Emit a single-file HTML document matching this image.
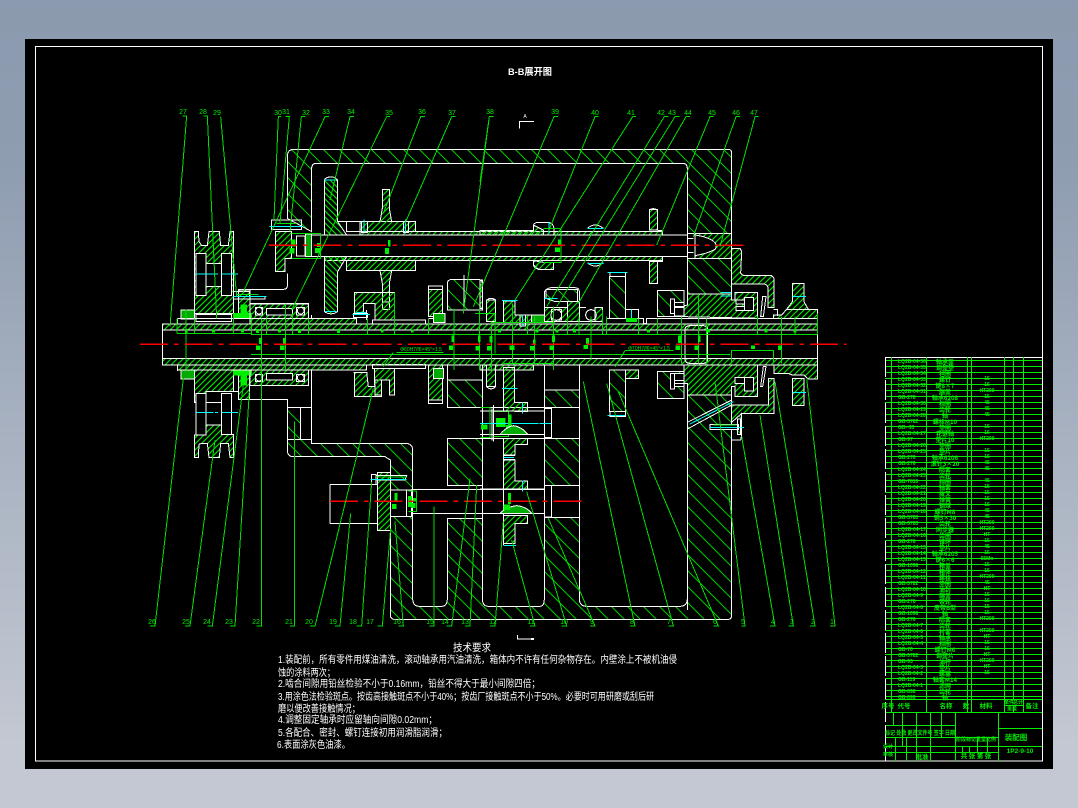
<!DOCTYPE html>
<html><head><meta charset="utf-8"><title>B-B展开图</title>
<style>
html,body{margin:0;padding:0;width:1078px;height:808px;overflow:hidden;background:linear-gradient(180deg,#8b9aae 0,#8f9db1 20%,#c3c8d2 92%,#c3c8d2 100%)}
svg{position:absolute;left:0;top:0;display:block}
.w{fill:none;stroke:#fff;stroke-width:3}
.b{fill:#000;stroke:#fff;stroke-width:3}
.c{fill:url(#c);stroke:#fff;stroke-width:3}
.f{fill:url(#f);stroke:#fff;stroke-width:3}
.k{fill:url(#k);stroke:#fff;stroke-width:3}
.d{fill:url(#d);stroke:#fff;stroke-width:3}
.g{fill:none;stroke:#0d0;stroke-width:3}
.G{fill:#0e0;stroke:#0e0;stroke-width:3}
.y{fill:none;stroke:#0ff;stroke-width:3}
.r{fill:none;stroke:#f00;stroke-width:4;stroke-dasharray:84 18 14 18}
.t{font-family:"Liberation Sans","Noto Sans CJK SC",sans-serif;fill:#fff}
.n{font-family:"Liberation Sans",sans-serif;font-size:7px;fill:#0e0;text-anchor:middle}
.s{font-family:"Liberation Sans",sans-serif;font-size:5px;font-weight:bold;fill:#0e0}
.z{font-family:"Noto Sans CJK SC","Liberation Sans",sans-serif;font-size:6px;font-weight:bold;fill:#0e0;text-anchor:middle}
</style></head><body>
<svg width="1078" height="808" viewBox="0 0 1078 808" shape-rendering="crispEdges" xmlns="http://www.w3.org/2000/svg">
<defs>
<pattern id="c" width="48" height="48" patternUnits="userSpaceOnUse"><path shape-rendering="geometricPrecision" d="M-5 -5L53 53M-15 33L15 63M33 -15L63 15" stroke="#0c0" stroke-width="3" fill="none"/></pattern>
<pattern id="f" width="18" height="18" patternUnits="userSpaceOnUse"><path shape-rendering="geometricPrecision" d="M-3 21L21 -3M-6 6L6 -6M12 24L24 12" stroke="#0d0" stroke-width="3.5" fill="none"/></pattern>
<pattern id="k" width="18" height="18" patternUnits="userSpaceOnUse"><path shape-rendering="geometricPrecision" d="M-3 -3L21 21M-6 12L6 24M12 -6L24 6" stroke="#0d0" stroke-width="3.5" fill="none"/></pattern>
<pattern id="d" width="9" height="9" patternUnits="userSpaceOnUse"><rect width="9" height="9" fill="#0a0"/></pattern>
<pattern id="rows" width="10" height="6" patternUnits="userSpaceOnUse"><rect width="10" height="1" fill="#0e0"/></pattern>
</defs>
<rect x="25" y="39" width="1028" height="730" fill="#000"/>
<rect x="35.5" y="46.5" width="1007" height="714.5" fill="none" stroke="#fff"/>

<g transform="translate(130,100) scale(.33333)">
<!-- housing top -->
<path class="c" d="M472 170Q472 148 492 148H1795Q1805 148 1805 160V400H1672V205Q1672 190 1657 190H560Q545 190 545 205V395L472 355Z"/>
<!-- housing lower -->
<g transform="translate(0,795)">
<path class="c" d="M472 223H545V235H830Q848 238 848 255V700Q848 724 868 724H935Q952 724 952 700V460H1057V700Q1057 724 1075 724H1230Q1243 724 1243 700V458H1348V700Q1348 724 1370 724H1650Q1672 724 1672 700V90H1805V750Q1805 764 1790 764H800Q781 764 781 750V285L765 275H490Q472 275 472 255Z"/>
<path class="w" d="M358 103H472V223M472 127H545M511 127V223M545 15V225"/>
<path class="c" d="M472 127H511V223H472Z"/>
<path class="c" d="M952 45H1057V127H952ZM952 220H1057V362H952ZM1243 75H1348V127H1243ZM1243 220H1348V362H1243Z"/>
<path class="w" d="M600 358H742M600 475H742M600 358V475M845 373H1265M845 445H1265M952 362H1057M952 127H1265M952 220H1265M1265 130V218M1265 362V456M1057 0V45M952 0V45M1243 0V75M1348 0V75M1265 362H1348M1265 458H1348M1265 127H1348M1265 220H1348"/>
<path class="b" d="M1243 130H1265V218H1243ZM1243 362H1265V456H1243Z"/>
<path class="f" d="M742 322H782V497H742Z"/>
<path class="b" d="M782 375H830V455H782ZM830 375H845V455H830Z"/>
<path class="w" d="M725 328H738V358H725ZM738 332H830L825 345H738"/>
<path class="y" d="M722 344H830"/>
<path class="g" d="M738 336H830M835 378H860V440H835"/>
<path class="G" d="M795 385h6v20h-6zM788 418h10v12h-10zM835 395h10v30h-10zM850 400h6v8h-6zM845 415h10v12h-10z"/>
<path class="w" d="M1086 130V225H1087M1090 120V230"/>
<path class="g" d="M1090 140H1135V215H1090"/>
<path class="G" d="M1100 160h25v25h-25z"/>
<path class="y" d="M1082 175H1120M1120 175H1240" stroke-dasharray="70 14 10 14"/>
</g>
<!-- main top shaft -->
<path class="w" d="M545 405H1672M545 470H1672"/>
<path class="f" d="M690 395H1598V405H690Z"/>
<path class="f" d="M583 470H1598V482H583Z"/>
<!-- upper gear -->
<path class="k" d="M583 240H623V365L650 405H583Z"/>
<path class="k" d="M583 470H650L623 515V635Q603 648 583 635Z"/>
<path class="w" d="M583 240Q590 228 612 232L623 240M623 365H857V395M650 365V395H690"/>
<path class="y" d="M585 240H620M585 635H620"/>
<path class="f" d="M650 482H857V512H650Z"/>
<path class="f" d="M750 365L757 325V268H778V325L785 365H857V395H690V365Z"/>
<path class="f" d="M750 512L757 550V628H778V550L785 512Z"/>
<path class="b" d="M757 606H778V628H757Z"/>
<path class="y" d="M702 358V400M826 358V400"/>
<path class="w" d="M694 365V398H712V365M820 365V398H836V365"/>
<!-- cover left -->
<path class="f" d="M436 395H485V475H465V515H436Z"/>
<path class="w" d="M465 475H485M472 520V558Q472 568 460 568H325V575"/>
<path class="b" d="M500 408H525V468H500Z"/>
<path class="d" d="M527 402H545V470H527Z"/>
<path class="g" d="M485 400H572V475H485"/>
<path class="G" d="M485 420h10v18h-10zM480 445h12v14h-12zM562 430h10v10h-10zM556 445h14v12h-14z"/>
<path class="w" d="M425 360H515V388H425Z"/>
<path class="y" d="M418 380H518"/>
<path class="g" d="M440 370H500"/>
<!-- pulley -->
<path class="f" d="M193 395H205L207 425L215 437H232L237 395H268L272 437H295L300 395H310V640H193Z"/>
<path class="b" d="M198 460H228V587H198ZM275 460H305V587H275ZM228 490H275V560H228ZM198 643H305V665H198Z"/>
<path class="y" d="M198 522H264M275 522H324"/>
<path class="d" d="M153 630H193V657H153Z"/>
<path class="f" d="M325 570H360V640H325Z"/>
<path class="w" d="M310 575H358V590H405V597H310Z"/>
<path class="y" d="M310 590H410"/>
<path class="g" d="M320 583H385"/>
<path class="G" d="M333 615h17v25h-17zM310 640h55v15h-55z"/>
<path class="f" d="M360 612H535V655H360Z"/>
<path class="b" d="M376 622H398V645H376ZM500 622H524V645H500ZM410 625H487V645H410Z"/>
<circle cx="387" cy="632" r="10" class="b"/><circle cx="512" cy="632" r="10" class="b"/>
<path class="w" d="M142 655H680M142 655V672M360 610H535V655M727 660H887V672H727ZM710 630V660M545 645V655"/>
<path class="f" d="M360 655H680V672H360Z"/>
<!-- lower gear group left -->
<path class="f" d="M673 577H783L793 577V660H735V610H700V640H673Z"/>
<path class="w" d="M670 640H712V652H670Z"/>
<path class="y" d="M667 644H720M680 638H708"/>
<path class="f" d="M895 568H938V650H895Z"/>
<path class="w" d="M895 568V558H938V568M895 655H938V668"/>
<path class="d" d="M910 640H945V668H910Z"/>
<path class="c" d="M952 550Q952 540 965 538H1045Q1057 540 1057 550V630H952Z"/>
<path class="w" d="M1002 525V630"/>
<!-- lower left -->
<g transform="translate(0,795)">
<path class="f" d="M193 15H310V80H275H228L228 112H193Z"/>
<path class="b" d="M198 85H228V210H198ZM275 85H305V208H275ZM228 112H275V180H228Z"/>
<path class="f" d="M193 210H228V180H275V208H310V277H300L295 235H272L268 277H237L232 235H215L207 238L205 277H193Z"/>
<path class="y" d="M198 142H250M255 142H264M275 142H324"/>
<path class="d" d="M153 15H193V42H153Z"/>
<path class="f" d="M325 20H358V103H325Z"/>
<path class="w" d="M310 15V80H325"/>
<path class="G" d="M310 15h55v15h-55zM333 25h17v35h-17z"/>
<path class="f" d="M360 15H535V62H360Z"/>
<path class="b" d="M376 28H398V50H376ZM500 28H524V50H500ZM410 25H487V45H410Z"/>
<circle cx="387" cy="38" r="10" class="b"/><circle cx="512" cy="38" r="10" class="b"/>
<path class="f" d="M142 0H710V15H142Z"/>
<path class="w" d="M142 0V18"/>
<path class="f" d="M673 95V22H710L715 65H735V45L755 45V95Z"/>
<path class="f" d="M733 10H793V90H778V45H755V90H735Z"/>
<path class="w" d="M670 22H712M727 -2H887V10H727Z"/>
<path class="f" d="M895 0H938V105H895Z"/>
<path class="w" d="M895 105V115H938V105"/>
<path class="d" d="M910 10H940V40H910Z"/>
</g>
<!-- shaft -->
<path class="f" d="M97 672H2063V690H97Z"/>
<path class="f" d="M97 775H2063V795H97Z"/>
<path class="b" d="M97 690H2063V775H97Z"/>
<path class="w" d="M97 672V795"/>
<!-- middle parts -->
<g transform="translate(1050,0)">
<path class="f" d="M0 540H7V625H0ZM20 600H47V665H20Z"/>
<path class="w" d="M20 600Q33 590 47 600"/>
<path class="f" d="M70 603H105V645H155V668H70Z"/>
<path class="y" d="M66 601H112"/>
<path class="w" d="M120 645V678H136V645"/>
<path class="y" d="M127 645V678"/>
<path class="d" d="M155 645H193V668H155Z"/>
<path class="w" d="M193 575Q203 563 213 563H285Q298 563 298 575V665H262M193 575V665"/>
<path class="c" d="M198 568H293V605H225L198 595Z"/>
<path class="y" d="M193 595H232"/>
<path class="f" d="M193 622H262V665H193Z"/>
<path class="b" d="M214 628H244V660H214Z"/><circle class="b" cx="229" cy="645" r="16"/>
<path class="f" d="M262 605H298V665H262Z"/>
<circle class="b" cx="333" cy="645" r="16"/>
<path class="f" d="M345 622H368V665H345Z"/>
<path class="w" d="M298 622H318M298 665H368"/>
<path class="c" d="M388 530H437V655H388Z"/>
<path class="y" d="M382 518H442"/>
<path class="w" d="M390 518V530M437 518V530M437 628H475V655H437M380 655H490V670H500V655H1013"/>
<path class="y" d="M455 628V655"/>
<path class="G" d="M440 655h30v10h-30z"/>
<path class="f" d="M500 655H1013V628H920L905 645H880V655"/>
<path class="c" d="M532 572H612V650H532Z"/>
<path class="b" d="M572 597H584V640H572ZM584 608H612V620H584ZM584 622H612V648H584Z"/>
<path class="f" d="M612 650V618L622 615V582H755V600H765V577H833V655Z"/>
<path class="b" d="M793 592H820V632H793Z"/><path class="b" d="M768 620H793V632H768ZM768 600H793V612H768Z"/>
<path class="y" d="M722 578H755M722 588H755"/>
<path class="c" d="M622 475H755V582H622Z"/>
<path class="f" d="M645 400H755V475H645Z"/>
<path class="b" d="M645 405Q690 412 705 428Q712 440 705 448Q685 460 645 467Z"/>
<path class="w" d="M622 400H645V475H622ZM622 415H640M622 458H640"/>
<path class="f" d="M755 445H780L785 455L782 520L790 526H875L882 535V622H864V562Q860 552 850 552H755Z"/>
<path class="b" d="M848 590L858 590L850 650H842Z"/>
<path class="f" d="M937 550H972V605L985 628H920L937 605Z"/>
<path class="y" d="M937 589H978"/>
<path class="w" d="M880 628H892V648"/>
<path class="w" d="M615 690Q615 677 630 677H670Q683 677 683 690V775Q683 790 670 790H630Q615 790 615 775Z"/>
<path class="g" d="M755 790V752H880V790"/>
<path class="f" d="M160 392H0V405H190V390L160 375Z"/>
<path class="f" d="M160 482V495L175 508H220V487H190L160 482Z"/>
<path class="w" d="M160 395V375Q165 367 175 367H205Q222 370 222 390V405M160 482V495Q165 508 180 508H220V487"/>
<path class="y" d="M207 366V400"/>
<path class="g" d="M190 385H243V487H190"/>
<path class="f" d="M508 328H532V390H508Z"/>
<path class="f" d="M508 485H532V550H508Z"/>
<path class="w" d="M508 330Q520 322 532 330M548 392H532M548 392V405M548 470V485H532"/>
<path class="w" d="M322 385Q345 365 370 385M322 488Q345 508 370 488"/>
<path class="y" d="M322 385H370M322 490H370"/>
</g>
<g transform="translate(1050,795)">
<path class="f" d="M0 15H160V0H0Z"/>
<path class="w" d="M7 0V700Q7 724 25 724H180Q193 724 193 700V40M298 0V700M622 55V735"/>
<path class="f" d="M20 0H47V65H20Z"/>
<path class="w" d="M20 65Q33 78 47 65"/>
<path class="f" d="M70 8H103V112H143V140H105V138H70Z"/>
<path class="y" d="M66 70H112M127 112V146"/>
<path class="w" d="M70 138H193M70 208H193M0 138H70M0 208H60"/>
<path class="y" d="M0 175H130M140 175H175M190 175H213"/>
<path class="G" d="M85 150h8v30h-8zM80 182h14v10h-14zM5 180h16v12h-16z"/>
<path class="g" d="M2 128H30V218H2"/>
<path class="d" d="M60 208Q80 185 100 182Q125 185 143 208Z"/>
<path class="f" d="M70 220H143V238H105V270H70Z"/>
<path class="f" d="M70 285H105V348H143V372H70Z"/>
<path class="w" d="M70 220V540M105 238V270M105 285V348M70 272H105M70 284H105"/>
<path class="y" d="M70 277H102M128 346V380"/>
<path class="w" d="M0 372H193M0 445H193"/>
<path class="d" d="M60 445Q80 425 110 422Q140 425 155 445Z"/>
<path class="G" d="M85 385h6v30h-6zM72 420h16v14h-16z"/>
<path class="f" d="M70 452H143V475H105V535H70Z"/>
<path class="y" d="M70 541H108"/>
<path class="c" d="M388 15H437V140H388Z"/>
<path class="f" d="M437 15H475V40H437Z"/>
<path class="y" d="M382 152H438"/>
<path class="w" d="M390 140V155H437V140"/>
<path class="c" d="M532 20H612V100H532Z"/>
<path class="b" d="M572 25H584V72H572ZM584 25H612V47H584ZM584 55H612V65H584Z"/>
<path class="f" d="M612 0H833V95H765V65H755V90H622V55H612Z"/>
<path class="b" d="M765 38H793V55H765ZM793 38H820V78H793Z"/>
<path class="f" d="M755 120H865V40H882V145H785L755 172Z"/>
<path class="b" d="M848 65L858 5L850 5L842 65Z"/>
<path class="c" d="M755 172L785 145V172L785 210L782 225H755Z"/>
<path class="w" d="M622 172L755 105V120L622 192Z"/>
<path class="y" d="M628 178L760 110"/>
<path class="b" d="M690 178H775V193H690Z"/>
<path class="y" d="M690 187H792"/>
<path class="g" d="M700 180H770"/>
<path class="w" d="M772 162H782V208H772ZM755 225H782"/>
<path class="f" d="M500 0H1013V42H985L972 30H937L925 25H882V0Z"/>
<path class="f" d="M937 40H972V122H937Z"/>
<path class="y" d="M937 82H978"/>
<path class="w" d="M1013 0V42"/>
</g>
<path class="w" d="M2063 628V795"/>
<!-- green dims -->
<path class="g" d="M141 700H363M363 703H2063M363 763H1800M141 655V700M1995 650V703"/>
<path class="g" d="M168 628V810M193 655V700M310 640V700M365 655V703M395 655V810M410 655V703M466 610V810M487 640V703M535 655V703M712 655V703M793 577V703M895 655V703M972 625V810M1048 625V810M1035 640H1095V760"/>
<g transform="translate(1050,0)" class="g"><path d="M35 665V810M98 610V795M143 650V703M163 650V790M220 620V810M262 650V703M297 650V703M333 650V780M368 630V703M380 650V703M475 655V703M533 655V703M605 650V790M655 582V790M680 655V790M832 650V703M905 650V790M1013 640V703M220 790H70M35 668H225"/></g>
<g class="G">
<path d="M166 688h5v10h-5zM248 690h5v6h-5zM334 688h6v8h-6zM380 688h6v10h-6zM446 690h5v6h-5zM506 688h6v10h-6zM622 688h6v10h-6zM754 690h5v6h-5zM844 690h5v6h-5zM388 716h6v14h-6zM380 738h10v10h-10zM460 716h5v14h-5zM452 738h10v10h-10zM966 708h5v16h-5zM958 738h10v10h-10zM1045 708h5v16h-5zM1038 740h10v10h-10zM775 422h5v16h-5zM766 446h10v14h-10z"/>
</g>
<g transform="translate(1050,0)" class="G">
<path d="M30 710h6v16h-6zM22 740h12v10h-12zM90 738h12v10h-12zM160 720h5v14h-5zM152 740h10v10h-10zM218 708h5v16h-5zM210 738h10v10h-10zM320 716h5v14h-5zM312 736h10v10h-10zM595 708h6v20h-6zM588 738h10v10h-10zM655 708h5v16h-5zM645 738h10v10h-10zM680 688h8v8h-8zM815 738h8v8h-8zM896 738h8v10h-8zM855 688h6v8h-6zM942 688h6v8h-6zM235 420h5v12h-5zM226 444h12v10h-12zM56 688h6v8h-6zM168 690h6v6h-6zM228 690h6v6h-6zM280 688h6v8h-6zM503 690h6v6h-6z"/>
</g>
<!-- centre lines -->
<path class="r" d="M30 733H2150"/>
<path class="r" d="M417 436H1840"/>
<path class="r" d="M600 1204H1368"/>
<!-- fit texts -->
<path class="g" d="M800 757H940M1485 752H1630M790 757L760 800M1485 752L1455 800"/>
<!-- leaders top -->
<path class="g" d="M158 48H170L120 680M220 48H232L260 655M272 50L320 590M453 50H445L432 360M467 50H478L450 370M526 50H514L480 395M597 50H585L340 575M672 50H660L600 300M780 50H770L485 630M885 50H872L760 340M977 50H965L825 370M1088 50H1078L1000 640"/>
<g transform="translate(1050,0)" class="g">
<path d="M40 50H28L0 245M234 50H222L-20 620M355 50H345L205 395M468 50H458L105 600M565 50H553L200 620M598 50H585L230 620M630 50H618L295 610M700 50H690L530 435M780 50H768L640 410M835 50H825L720 440"/>
</g>
<!-- leaders bottom -->
<g transform="translate(0,795)" class="g">
<path d="M60 783H75L160 40M165 783H180L255 225M232 783H247L340 60M300 783H315L358 80M380 783H395V0M480 783H493V170M540 783H555L730 70M615 783H630L662 445M680 783H695L725 350M742 783H757L782 490M805 783H820L795 470M898 783H912V425M950 783H965L1020 340M1005 783H1020L1040 360"/>
</g>
<g transform="translate(1050,795)" class="g">
<path d="M30 783H45L70 470M150 783H165L95 525M245 783H260L140 380M330 783H345L205 460M450 783H465L310 50M565 783H580L380 55M700 783H715L415 80M785 783H795L705 50M870 783H885L785 215M925 783H940L840 150M990 783H1005L885 50M1050 783H1065L980 40"/>
</g>
<!-- section marks -->
<path class="w" d="M1168 85V65H1212"/>
</g>
<path d="M517.5 635V639H533" fill="none" stroke="#fff"/>
<rect x="531" y="638" width="3" height="2" fill="#fff"/>

<!-- labels -->
<g class="n">
<text x="183" y="114">27</text><text x="203" y="114">28</text><text x="217" y="115">29</text><text x="278" y="115">30</text><text x="286" y="114">31</text><text x="306" y="115">32</text><text x="326" y="114">33</text><text x="351" y="114">34</text><text x="389" y="115">35</text><text x="422" y="114">36</text><text x="452" y="115">37</text><text x="490" y="114">38</text><text x="555" y="114">39</text><text x="595" y="115">40</text><text x="631" y="115">41</text><text x="661" y="115">42</text><text x="672" y="115">43</text><text x="688" y="115">44</text><text x="712" y="115">45</text><text x="736" y="115">46</text><text x="754" y="115">47</text>
<text x="152" y="624">26</text><text x="186" y="624">25</text><text x="207" y="624">24</text><text x="229" y="624">23</text><text x="256" y="624">22</text><text x="289" y="624">21</text><text x="309" y="624">20</text><text x="333" y="624">19</text><text x="353" y="624">18</text><text x="370" y="624">17</text><text x="397" y="624">16</text><text x="430" y="624">15</text><text x="445" y="624">14</text><text x="465" y="624">13</text><text x="493" y="624">12</text><text x="531" y="624">11</text><text x="564" y="624">10</text><text x="592" y="624">9</text><text x="632" y="624">8</text><text x="669" y="624">7</text><text x="715" y="624">6</text><text x="743" y="624">5</text><text x="773" y="624">4</text><text x="792" y="624">3</text><text x="813" y="624">2</text><text x="832" y="624">1</text>
</g>
<text class="n" x="421" y="351" style="font-size:5px">Φ60H7/f6×45°×1.5</text>
<text class="n" x="649" y="350" style="font-size:5px">Φ70H7/f6×45°×1.5</text>
<text class="n" x="525" y="118" style="fill:#fff;font-size:5px">A</text>

<!-- title -->
<text class="t" x="508" y="75" font-size="9.5" font-weight="bold" textLength="44" lengthAdjust="spacingAndGlyphs">B-B展开图</text>

<!-- technical notes -->
<g class="t" font-size="10">
<text x="453" y="651" font-size="10.5" textLength="38" lengthAdjust="spacingAndGlyphs">技术要求</text>
<text x="278" y="663" textLength="399" lengthAdjust="spacingAndGlyphs">1.装配前，所有零件用煤油清洗，滚动轴承用汽油清洗，箱体内不许有任何杂物存在。内壁涂上不被机油侵</text>
<text x="278" y="676" textLength="57" lengthAdjust="spacingAndGlyphs">蚀的涂料两次；</text>
<text x="278" y="687" textLength="262" lengthAdjust="spacingAndGlyphs">2.啮合间隙用铅丝检验不小于0.16mm，铅丝不得大于最小间隙四倍；</text>
<text x="278" y="700" textLength="376" lengthAdjust="spacingAndGlyphs">3.用涂色法检验斑点。按齿高接触斑点不小于40%；按齿厂接触斑点不小于50%。必要时可用研磨或刮后研</text>
<text x="278" y="712" textLength="82" lengthAdjust="spacingAndGlyphs">磨以便改善接触情况；</text>
<text x="278" y="723" textLength="159" lengthAdjust="spacingAndGlyphs">4.调整固定轴承时应留轴向间隙0.02mm；</text>
<text x="278" y="736" textLength="169" lengthAdjust="spacingAndGlyphs">5.各配合、密封、螺钉连接初用润滑脂润滑；</text>
<text x="277" y="748" textLength="73" lengthAdjust="spacingAndGlyphs">6.表面涂灰色油漆。</text>
</g>

<!-- parts table -->
<rect x="885" y="357" width="157" height="342" fill="url(#rows)"/>
<path d="M885.5 357.5H1042.5" stroke="#fff" fill="none"/>
<path d="M891.5 357V712M926.5 357V712M967.5 357V712M971.5 357V712M1004.5 357V712M1013.5 357V699M1023.5 357V712M885 699.5H1042M885 712.5H1042M1004 705.5H1023M1013.5 705V712M955.5 712V761M998.5 712V761M885 725.5H955M885 737.5H955M885 746.5H1042M885 752.5H998M955 737.5H998M998 728.5H1042M893.5 712V725M902.5 712V746M916.5 712V761M930.5 712V761M941.5 712V737M895.5 737V761M906.5 737V761M977.5 737V752M987.5 737V752M962.5 746V752M969.5 746V752" stroke="#0e0" fill="none"/>
<path d="M885.5 357V761" stroke="#fff" fill="none" stroke-dasharray="20 3"/>
<text class="s" x="898" y="358"><tspan x="898" dy="5">LQ2B-04-36</tspan><tspan x="898" dy="6">LQ2B-04-35</tspan><tspan x="898" dy="6">LQ2B-04-34</tspan><tspan x="898" dy="6">LQ2B-04-33</tspan><tspan x="898" dy="6">LQ2B-04-32</tspan><tspan x="898" dy="6">LQ2B-04-31</tspan><tspan x="898" dy="6">GB-278</tspan><tspan x="898" dy="6">LQ2B-04-30</tspan><tspan x="898" dy="6">LQ2B-04-29</tspan><tspan x="898" dy="6">LQ2B-04-28</tspan><tspan x="898" dy="6">GB-5782</tspan><tspan x="898" dy="6">GB--93</tspan><tspan x="898" dy="6">LQ2B-04-27</tspan><tspan x="898" dy="6">GB-97</tspan><tspan x="898" dy="6">LQ2B-04-26</tspan><tspan x="898" dy="6">LQ2B-04-25</tspan><tspan x="898" dy="6">GB-276</tspan><tspan x="898" dy="6">GB-276</tspan><tspan x="898" dy="6">LQ2B-04-24</tspan><tspan x="898" dy="6">LQ2B-04-23</tspan><tspan x="898" dy="6">GB-7810</tspan><tspan x="898" dy="6">LQ2B-04-22</tspan><tspan x="898" dy="6">LQ2B-04-21</tspan><tspan x="898" dy="6">LQ2B-04-20</tspan><tspan x="898" dy="6">LQ2B-04-19</tspan><tspan x="898" dy="6">LQ2B-04-18</tspan><tspan x="898" dy="6">GB-5783</tspan><tspan x="898" dy="6">GB-5783</tspan><tspan x="898" dy="6">LQ2B-04-17</tspan><tspan x="898" dy="6">LQ2B-04-16</tspan><tspan x="898" dy="6">GB-276</tspan><tspan x="898" dy="6">LQ2B-04-15</tspan><tspan x="898" dy="6">LQ2B-04-14</tspan><tspan x="898" dy="6">LQ2B-04-13</tspan><tspan x="898" dy="6">GB-1096</tspan><tspan x="898" dy="6">LQ2B-04-12</tspan><tspan x="898" dy="6">LQ2B-04-11</tspan><tspan x="898" dy="6">GB-5782</tspan><tspan x="898" dy="6">LQ2B-04-10</tspan><tspan x="898" dy="6">LQ2B-04-9</tspan><tspan x="898" dy="6">GB-278</tspan><tspan x="898" dy="6">LQ2B-04-8</tspan><tspan x="898" dy="6">GB-1096</tspan><tspan x="898" dy="6">GB-276</tspan><tspan x="898" dy="6">LQ2B-04-7</tspan><tspan x="898" dy="6">LQ2B-04-6</tspan><tspan x="898" dy="6">LQ2B-04-5</tspan><tspan x="898" dy="6">LQ2B-04-4</tspan><tspan x="898" dy="6">GB-70</tspan><tspan x="898" dy="6">GB-5782</tspan><tspan x="898" dy="6">GB-93</tspan><tspan x="898" dy="6">LQ2B-04-3</tspan><tspan x="898" dy="6">LQ2B-04-2</tspan><tspan x="898" dy="6">GB-119</tspan><tspan x="898" dy="6">LQ2B-04-1</tspan><tspan x="898" dy="6">GB-898</tspan><tspan x="898" dy="6">GB-899</tspan></text>
<text class="z" x="945" y="358"><tspan x="945" dy="6">轴承盖</tspan><tspan x="945" dy="6">调整垫</tspan><tspan x="945" dy="6">毡圈</tspan><tspan x="945" dy="6">螺钉</tspan><tspan x="945" dy="6">键8×7</tspan><tspan x="945" dy="6">端盖</tspan><tspan x="945" dy="6">轴承6208</tspan><tspan x="945" dy="6">挡圈</tspan><tspan x="945" dy="6">齿轮</tspan><tspan x="945" dy="6">轴</tspan><tspan x="945" dy="6">螺栓M10</tspan><tspan x="945" dy="6">垫圈</tspan><tspan x="945" dy="6">花键轴</tspan><tspan x="945" dy="6">垫片10</tspan><tspan x="945" dy="6">垫圈</tspan><tspan x="945" dy="6">垫片</tspan><tspan x="945" dy="6">轴承6206</tspan><tspan x="945" dy="6">滚针3×20</tspan><tspan x="945" dy="6">隔套</tspan><tspan x="945" dy="6">齿轮</tspan><tspan x="945" dy="6">挡圈</tspan><tspan x="945" dy="6">轴套</tspan><tspan x="945" dy="6">拨叉</tspan><tspan x="945" dy="6">弹簧</tspan><tspan x="945" dy="6">钢球</tspan><tspan x="945" dy="6">螺钉M8</tspan><tspan x="945" dy="6">销5×30</tspan><tspan x="945" dy="6">齿轮</tspan><tspan x="945" dy="6">同步器</tspan><tspan x="945" dy="6">齿圈</tspan><tspan x="945" dy="6">锥环</tspan><tspan x="945" dy="6">垫片</tspan><tspan x="945" dy="6">轴承6205</tspan><tspan x="945" dy="6">键6×6</tspan><tspan x="945" dy="6">箱盖</tspan><tspan x="945" dy="6">箱体</tspan><tspan x="945" dy="6">螺栓</tspan><tspan x="945" dy="6">垫圈</tspan><tspan x="945" dy="6">油封</tspan><tspan x="945" dy="6">端盖</tspan><tspan x="945" dy="6">带轮</tspan><tspan x="945" dy="6">皮带B型</tspan><tspan x="945" dy="6">轴</tspan><tspan x="945" dy="6">隔套</tspan><tspan x="945" dy="6">齿轮</tspan><tspan x="945" dy="6">衬套</tspan><tspan x="945" dy="6">轴承</tspan><tspan x="945" dy="6">挡圈</tspan><tspan x="945" dy="6">螺钉M6</tspan><tspan x="945" dy="6">调整片</tspan><tspan x="945" dy="6">油杯</tspan><tspan x="945" dy="6">垫片</tspan><tspan x="945" dy="6">螺塞</tspan><tspan x="945" dy="6">轴套M14</tspan><tspan x="945" dy="6">滤网</tspan><tspan x="945" dy="6">齿轮</tspan><tspan x="945" dy="6">轴</tspan></text>
<text class="s" x="987" y="358" style="text-anchor:middle"><tspan x="987" dy="22">15</tspan><tspan x="987" dy="6">15</tspan><tspan x="987" dy="6">HT200</tspan><tspan x="987" dy="6">15</tspan><tspan x="987" dy="6">45</tspan><tspan x="987" dy="6">45</tspan><tspan x="987" dy="6">45</tspan><tspan x="987" dy="12">15</tspan><tspan x="987" dy="6">15</tspan><tspan x="987" dy="6">HT200</tspan><tspan x="987" dy="12">15</tspan><tspan x="987" dy="6">15</tspan><tspan x="987" dy="6">45</tspan><tspan x="987" dy="6">45</tspan><tspan x="987" dy="12">45</tspan><tspan x="987" dy="6">15</tspan><tspan x="987" dy="6">15</tspan><tspan x="987" dy="6">15</tspan><tspan x="987" dy="6">15</tspan><tspan x="987" dy="6">45</tspan><tspan x="987" dy="6">45</tspan><tspan x="987" dy="6">HT200</tspan><tspan x="987" dy="6">HT200</tspan><tspan x="987" dy="6">HT</tspan><tspan x="987" dy="6">15</tspan><tspan x="987" dy="6">45</tspan><tspan x="987" dy="6">15</tspan><tspan x="987" dy="6">65Mn</tspan><tspan x="987" dy="6">15</tspan><tspan x="987" dy="6">15</tspan><tspan x="987" dy="6">HT200</tspan><tspan x="987" dy="6">45</tspan><tspan x="987" dy="6">HT</tspan><tspan x="987" dy="6">15</tspan><tspan x="987" dy="6">15</tspan><tspan x="987" dy="6">15</tspan><tspan x="987" dy="6">15</tspan><tspan x="987" dy="6">HT200</tspan><tspan x="987" dy="12">HT200</tspan><tspan x="987" dy="6">HT</tspan><tspan x="987" dy="6">15</tspan><tspan x="987" dy="6">15</tspan><tspan x="987" dy="6">HT</tspan><tspan x="987" dy="6">HT200</tspan><tspan x="987" dy="6">HT</tspan><tspan x="987" dy="6">15</tspan></text>
<g class="z" style="font-size:6.5px">
<text x="888" y="708">序号</text><text x="904" y="708">代号</text><text x="946" y="708">名称</text><text x="966" y="708">数</text><text x="986" y="708">材料</text><text x="1009" y="704" style="font-size:5px">单件</text><text x="1018" y="704" style="font-size:5px">总计</text><text x="1012" y="710" style="font-size:5px">重量</text><text x="1032" y="708">备注</text>
<text x="920" y="735" textLength="70" lengthAdjust="spacingAndGlyphs" style="font-size:6px">标记 处数 更改文件号 签字 日期</text>
<text x="888" y="748" style="font-size:5px">设计</text><text x="888" y="756" style="font-size:5px">审核</text><text x="922" y="759">批准</text>
<text x="966" y="741" style="font-size:5px">阶段标记</text><text x="981" y="741" style="font-size:5px">重量</text><text x="991" y="741" style="font-size:5px">比例</text>
<text x="976" y="758">共 张 第 张</text>
<text x="1016" y="740" style="font-size:7.5px">装配图</text>
<text x="1020" y="753" style="font-family:'Liberation Sans',sans-serif;font-size:6.5px">1P2-9-10</text>
</g>
</svg>
</body></html>
